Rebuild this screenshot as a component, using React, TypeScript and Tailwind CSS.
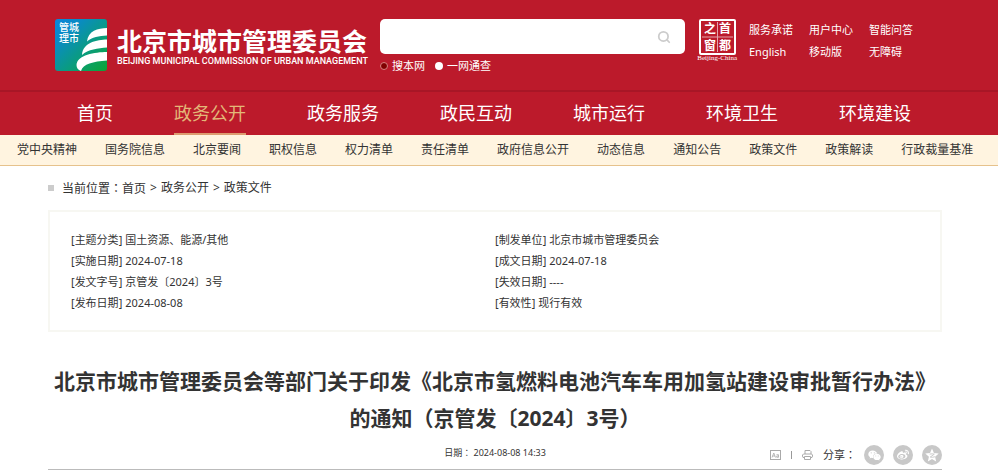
import { FaWeibo, FaWeixin } from "react-icons/fa";
import { Search } from "lucide-react";

const QUICK_LINKS = ["服务承诺", "用户中心", "智能问答", "English", "移动版", "无障碍"];

const NAV = ["首页", "政务公开", "政务服务", "政民互动", "城市运行", "环境卫生", "环境建设"];

const SUB_NAV = [
  "党中央精神",
  "国务院信息",
  "北京要闻",
  "职权信息",
  "权力清单",
  "责任清单",
  "政府信息公开",
  "动态信息",
  "通知公告",
  "政策文件",
  "政策解读",
  "行政裁量基准",
];

const META = [
  { label: "主题分类", value: "国土资源、能源/其他" },
  { label: "制发单位", value: "北京市城市管理委员会" },
  { label: "实施日期", value: "2024-07-18" },
  { label: "成文日期", value: "2024-07-18" },
  { label: "发文字号", value: "京管发〔2024〕3号" },
  { label: "失效日期", value: "----" },
  { label: "发布日期", value: "2024-08-08" },
  { label: "有效性", value: "现行有效" },
];

// Full-width colon, centred in its cell
function Colon() {
  return <span className="font-['Noto_Sans_CJK_TC',sans-serif]">：</span>;
}

function Logo() {
  return (
    <svg viewBox="0 0 52 52" className="size-[52px] shrink-0" aria-hidden="true">
      <defs>
        <linearGradient id="logo-bg" x1="0" y1="0" x2="1" y2="1">
          <stop offset="0" stopColor="#0a86dc" />
          <stop offset="0.25" stopColor="#0a8bc4" />
          <stop offset="0.6" stopColor="#0a9c80" />
          <stop offset="1" stopColor="#0ca535" />
        </linearGradient>
        <clipPath id="logo-clip">
          <rect width="52" height="52" rx="3" />
        </clipPath>
      </defs>
      <g clipPath="url(#logo-clip)">
        <rect width="52" height="52" fill="url(#logo-bg)" />
        <path
          fill="#fff"
          d="M52 9C43 9 33 12 32 22.500C37 18 44 17 52 16.500ZM52 20.500C42 21 28 23 27 36C33 30 43 29.500 52 28.500ZM52 33C40 33 22 36 21.500 46C21.500 49 23 51 26 52C28 45 38 42.500 52 41.500Z"
        />
        <g fill="#fff" fontSize="10" fontWeight="500" fontFamily="'Noto Sans CJK SC', sans-serif">
          <text x="4" y="12">管城</text>
          <text x="4" y="23">理市</text>
        </g>
      </g>
    </svg>
  );
}

function Seal() {
  return (
    <a href="#" className="flex shrink-0 flex-col items-center text-white">
      <svg viewBox="0 0 37 36" className="h-9 w-[37px]" aria-hidden="true">
        <rect x="1" y="1" width="35" height="34" rx="1" fill="none" stroke="#fff" strokeWidth="2" />
        <path d="M18.500 3V33M3 18H34" stroke="#fff" strokeWidth="1" opacity="0.6" />
        <g fill="#fff" fontSize="12" fontWeight="700" fontFamily="'Noto Sans CJK SC', sans-serif">
          <text x="5" y="14">之</text>
          <text x="20" y="14">首</text>
          <text x="5" y="31">窗</text>
          <text x="20" y="31">都</text>
        </g>
      </svg>
      <span className="font-['Liberation_Serif',serif] text-[7px] leading-[7px]">Beijing-China</span>
    </a>
  );
}

function FontSizeIcon() {
  return (
    <svg viewBox="0 0 11 10" className="h-2.5 w-[11px]" fill="none" stroke="#aaa" aria-hidden="true">
      <rect x="0.500" y="0.500" width="10" height="9" />
      <path d="M2 7.500L3.800 3L5.500 7.500M2.600 6H5M6.500 4.700H8.500V7.300H6.700V6H8.500" strokeWidth="0.800" />
    </svg>
  );
}

function PrintIcon() {
  return (
    <svg viewBox="0 0 11 10" className="h-2.5 w-[11px]" fill="none" stroke="#aaa" aria-hidden="true">
      <path d="M3 4V0.500H8L9 1.500V4M2.500 7.500H1L0.500 6V5L1.500 4H9.500L10.500 5V6L10 7.500H8.500M2.500 6.500H8.500V9.500H2.500Z" />
    </svg>
  );
}

function QzoneIcon() {
  return (
    <svg viewBox="0 0 24 24" className="size-3.5" aria-hidden="true">
      <path
        fill="#fff"
        d="M12 1L15.300 8.600L23.500 9.400L17.300 14.900L19.100 23L12 18.800L4.900 23L6.700 14.900L0.500 9.400L8.700 8.600Z"
      />
      <path d="M8 10.500Q12 9.500 16 10.500L9 15.500Q13 16.500 17 15" fill="none" stroke="#c8c8c8" strokeWidth="1.600" />
    </svg>
  );
}

function SearchForm() {
  return (
    <form className="min-w-0 flex-1 text-white" onSubmit={(e) => e.preventDefault()}>
      <div className="flex h-[35px] items-center rounded-[5px] bg-white pr-3.5">
        <input
          type="text"
          aria-label="搜索"
          className="h-full min-w-0 flex-1 bg-transparent px-3 text-sm text-[#333] outline-none"
        />
        <button type="submit" aria-label="搜索" className="text-[#ccc]">
          <Search size={14} strokeWidth={3} />
        </button>
      </div>
      <div className="mt-1 flex gap-2.5 text-[11px] leading-4">
        <label className="flex items-center gap-1">
          <input
            type="radio"
            name="scope"
            defaultChecked
            className="size-2 appearance-none rounded-full bg-white checked:border checked:border-[#d98080] checked:bg-[#800000]"
          />
          搜本网
        </label>
        <label className="flex items-center gap-1">
          <input
            type="radio"
            name="scope"
            className="size-2 appearance-none rounded-full bg-white checked:border checked:border-[#d98080] checked:bg-[#800000]"
          />
          一网通查
        </label>
      </div>
    </form>
  );
}

function Header() {
  return (
    <header className="bg-[#bc1a2b] text-white">
      <div className="flex items-start gap-3 border-b-2 border-[#a81626] pt-[19px] pr-[69px] pb-4 pl-[55px]">
        <a href="#" className="flex shrink-0 gap-2.5">
          <Logo />
          <span className="flex w-[251px] flex-col pt-2">
            <span className="text-[25px] leading-7 font-bold">北京市城市管理委员会</span>
            <span className="font-['Roboto',sans-serif] text-[9px] leading-3 font-medium whitespace-nowrap">
              BEIJING MUNICIPAL COMMISSION OF URBAN MANAGEMENT
            </span>
          </span>
        </a>
        <SearchForm />
        <Seal />
        <ul className="grid shrink-0 grid-cols-[60px_60px_60px] text-[11px] leading-[22px]">
          {QUICK_LINKS.map((label) => (
            <li key={label}>
              <a href="#">{label}</a>
            </li>
          ))}
        </ul>
      </div>
      <nav className="flex h-[43px] justify-center gap-[61px] pr-2.5 text-lg">
        {NAV.map((label) => (
          <a
            key={label}
            href="#"
            className={
              label === "政务公开"
                ? "flex items-center border-b-2 border-[#dd9c70] text-[#e3b778]"
                : "flex items-center border-b-2 border-transparent"
            }
          >
            {label}
          </a>
        ))}
      </nav>
    </header>
  );
}

function ArticleInfo() {
  return (
    <dl className="grid grid-cols-2 border-2 border-[#f7f7f2] px-[21px] py-[17px] text-[11px] leading-[21px]">
      {META.map((item) => (
        <div key={item.label} className="flex gap-[3px]">
          <dt>[{item.label}]</dt>
          <dd>{item.value}</dd>
        </div>
      ))}
    </dl>
  );
}

export default function App() {
  return (
    <div className="bg-white font-['Noto_Sans','Noto_Sans_CJK_SC',sans-serif] text-[#333]">
      <Header />
      <nav className="flex h-[31px] items-center gap-7 border-b border-[#e6c28c] bg-[#fff4e0] pl-[17px] text-xs whitespace-nowrap">
        {SUB_NAV.map((label) => (
          <a key={label} href="#">
            {label}
          </a>
        ))}
      </nav>

      <main className="pr-14 pl-12">
        <nav className="flex h-[44px] items-center gap-1 text-xs">
          <span className="mr-1 size-1.5 bg-[#ccc]" />
          <span>
            当前位置
            <Colon />
            <a href="#">首页</a>
          </span>
          <span>&gt;</span>
          <a href="#">政务公开</a>
          <span>&gt;</span>
          <a href="#">政策文件</a>
        </nav>

        <ArticleInfo />

        <h1 className="mt-[31px] text-center text-[21px] leading-[37px] font-bold">
          北京市城市管理委员会等部门关于印发《北京市氢燃料电池汽车车用加氢站建设审批暂行办法》
          <br />
          的通知（京管发〔2024〕3号）
        </h1>

        <div className="grid h-[33px] grid-cols-[1fr_auto_1fr] items-center border-b border-[#bbb]">
          <p className="col-start-2 text-[9px]">
            日期
            <Colon /> 2024-08-08 14:33
          </p>
          <div className="flex items-center justify-end pt-1">
            <button type="button" aria-label="字体大小">
              <FontSizeIcon />
            </button>
            <span className="mx-2.5 h-2 w-px bg-[#999]" />
            <button type="button" aria-label="打印">
              <PrintIcon />
            </button>
            <span className="mr-2 ml-2.5 text-[11px]">
              分享
              <Colon />
            </span>
            <div className="flex gap-[9px] text-white">
              <a href="#" aria-label="微信" className="flex size-5 items-center justify-center rounded-full bg-[#c8c8c8]">
                <FaWeixin size={13} />
              </a>
              <a href="#" aria-label="微博" className="flex size-5 items-center justify-center rounded-full bg-[#c8c8c8]">
                <FaWeibo size={12} />
              </a>
              <a href="#" aria-label="QQ空间" className="flex size-5 items-center justify-center rounded-full bg-[#c8c8c8]">
                <QzoneIcon />
              </a>
            </div>
          </div>
        </div>
      </main>
    </div>
  );
}
